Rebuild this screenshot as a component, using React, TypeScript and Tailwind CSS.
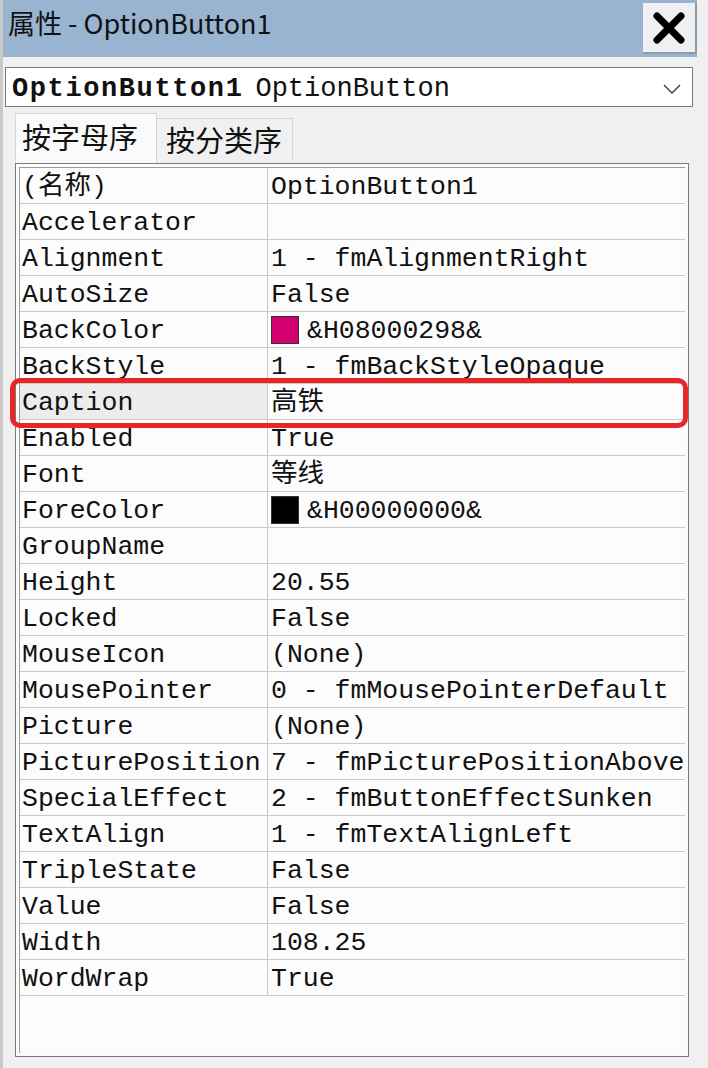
const mono = "font-['Liberation_Mono','Noto_Sans_CJK_SC',monospace]";
const cjk = "font-['Noto_Sans_CJK_SC','Liberation_Sans',sans-serif]";

type Prop = { name: string; value: string; swatch?: string };

const props: Prop[] = [
  { name: "(名称)", value: "OptionButton1" },
  { name: "Accelerator", value: "" },
  { name: "Alignment", value: "1 - fmAlignmentRight" },
  { name: "AutoSize", value: "False" },
  { name: "BackColor", value: "&H08000298&", swatch: "bg-[#d2006e]" },
  { name: "BackStyle", value: "1 - fmBackStyleOpaque" },
  { name: "Caption", value: "高铁" },
  { name: "Enabled", value: "True" },
  { name: "Font", value: "等线" },
  { name: "ForeColor", value: "&H00000000&", swatch: "bg-black" },
  { name: "GroupName", value: "" },
  { name: "Height", value: "20.55" },
  { name: "Locked", value: "False" },
  { name: "MouseIcon", value: "(None)" },
  { name: "MousePointer", value: "0 - fmMousePointerDefault" },
  { name: "Picture", value: "(None)" },
  { name: "PicturePosition", value: "7 - fmPicturePositionAbove" },
  { name: "SpecialEffect", value: "2 - fmButtonEffectSunken" },
  { name: "TextAlign", value: "1 - fmTextAlignLeft" },
  { name: "TripleState", value: "False" },
  { name: "Value", value: "False" },
  { name: "Width", value: "108.25" },
  { name: "WordWrap", value: "True" },
];

export default function App() {
  return (
    <div className="relative h-[1068px] w-[708px] overflow-hidden border-l-[3px] border-[#c9c9c9] bg-[#f0f0f0] text-[#111]">
      {/* Title bar */}
      <div className="flex h-[57px] w-[694px] items-start justify-between bg-[#99b4d1]">
        <span className={`mt-[4px] pl-[5px] text-[27px] leading-[38px] ${cjk}`}>
          属性 - OptionButton1
        </span>
        <div className="mt-[3px] flex h-[51px] w-[54px] items-center justify-center border-r-2 border-b-2 border-[#8e9aa8] bg-[#eef0f3]">
          <svg width="36" height="36" viewBox="0 0 36 36">
            <path
              d="M6 6 L30 30 M30 6 L6 30"
              stroke="#000"
              strokeWidth="7"
              strokeLinecap="round"
            />
          </svg>
        </div>
      </div>

      {/* Object dropdown */}
      <div className="ml-[2px] mt-[10px] flex h-[40px] w-[688px] items-center border border-[#7a7a7a] bg-white pl-[6px] pt-[4px]">
        <span className={`text-[27px] font-bold tracking-[1.6px] ${mono}`}>OptionButton1</span>
        <span className={`ml-[12px] text-[27px] ${mono}`}>OptionButton</span>
        <svg className="ml-auto mr-[10px]" width="20" height="12" viewBox="0 0 20 12">
          <path d="M2 2 L10 10 L18 2" fill="none" stroke="#444" strokeWidth="1.5" />
        </svg>
      </div>

      {/* Tabs */}
      <div className="ml-[12px] mt-[6px] flex h-[50px] items-end">
        <div className={`h-[50px] w-[142px] border-x border-t border-[#d6d6d6] bg-[#fafafa] pl-[6px] text-[29px] leading-[44px] ${cjk}`}>
          按字母序
        </div>
        <div className={`mb-[3px] h-[42px] w-[136px] border-r border-t border-[#d6d6d6] bg-[#f0f0f0] pl-[9px] text-[29px] leading-[40px] ${cjk}`}>
          按分类序
        </div>
      </div>

      {/* Property grid */}
      <div className="ml-[12px] h-[894px] w-[674px] border border-[#7a7a7a] bg-[#fbfbfb] p-[3px]">
        <div className="h-full border-l border-t border-[#9a9a9a] bg-[#fcfcfc]">
          {props.map((p) => (
            <div key={p.name} className="flex h-[36px] border-b border-[#c8c8c8]">
              <div
                className={`flex w-[248px] shrink-0 items-center border-r border-[#c8c8c8] pl-[2px] pt-[5px] text-[26.5px] ${mono} ${
                  p.name === "Caption" ? "bg-[#ececec]" : ""
                }`}
              >
                {p.name}
              </div>
              <div className={`flex items-center whitespace-nowrap pl-[3px] pt-[5px] text-[26.5px] ${mono}`}>
                {p.swatch && (
                  <span className={`mr-[8px] -mt-[5px] h-[28px] w-[28px] border border-[#333] ${p.swatch}`} />
                )}
                {p.value}
              </div>
            </div>
          ))}
        </div>
      </div>

      {/* Red highlight over the Caption row */}
      <div className="absolute left-[7px] top-[378px] h-[50px] w-[678px] rounded-[10px] border-[5px] border-[#e8262a]" />
    </div>
  );
}
